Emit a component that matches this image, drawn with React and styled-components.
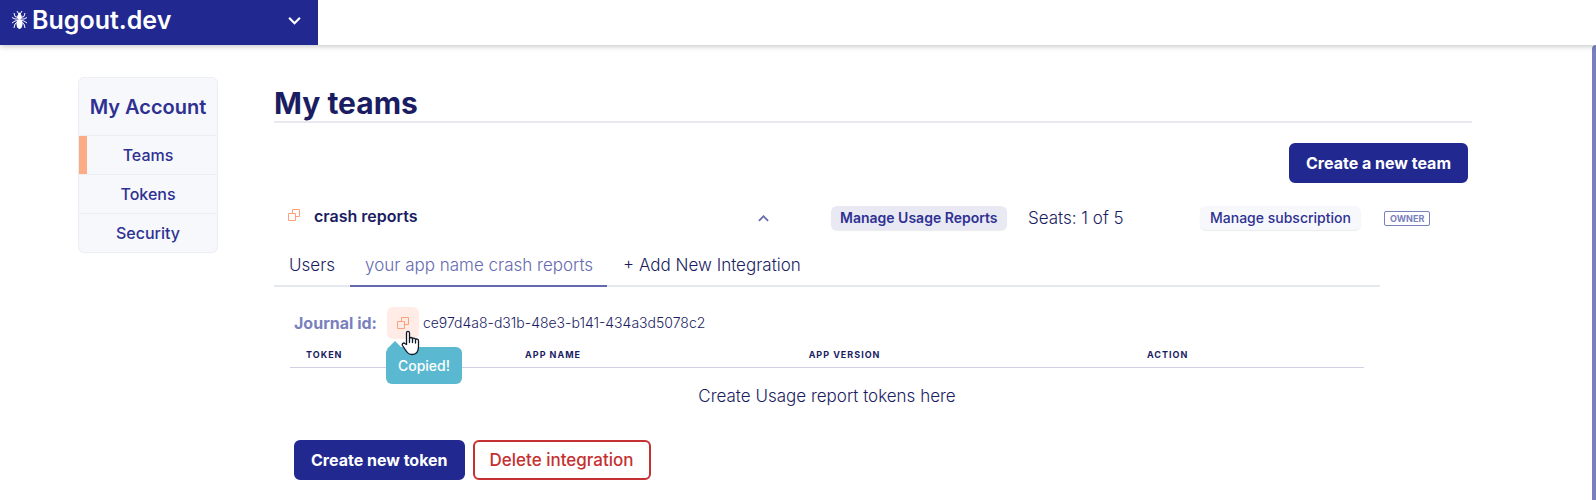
import React from "react";
import styled, { createGlobalStyle, ThemeProvider } from "styled-components";

const theme = {
  navy: "#212990",
  ink: "#1a1d62",
  text: "#2e3192",
  muted: "#7a7fbd",
  accent: "#ffa07a",
  marker: "#fdab85",
  panel: "#f7f8fc",
  line: "#edeef3",
};

const GlobalStyle = createGlobalStyle`
  *, *::before, *::after { box-sizing: border-box; }
  body {
    margin: 0;
    background: #fff;
    color: #1a1d62;
    font-family: Inter, "Liberation Sans", sans-serif;
    font-size: 16px;
    line-height: 24px;
  }
  h1, h2, p { margin: 0; }
  button { font: inherit; border: 0; padding: 0; cursor: pointer; background: none; color: inherit; white-space: nowrap; }
  a { color: inherit; text-decoration: none; }
`;

const Page = styled.div`
  display: flex;
  flex-direction: column;
  min-height: 100vh;
`;

const TopBar = styled.header`
  display: flex;
  height: 45px;
  background: #fff;
  box-shadow: 0 1px 6px rgba(0, 0, 0, 0.25);
  z-index: 1;
`;

const Brand = styled.div`
  display: flex;
  align-items: center;
  justify-content: space-between;
  width: 318px;
  padding: 0 16px 4px 11px;
  background: ${(p) => p.theme.navy};
  color: #fff;
`;

const BrandLink = styled.a`
  display: flex;
  align-items: center;
  gap: 4px;
  padding-bottom: 2px;
  font-size: 25px;
  line-height: 32px;
  font-weight: 600;
`;

const IconButton = styled.button`
  display: flex;
  align-items: center;
  justify-content: center;
  width: ${(p) => p.$size}px;
  height: ${(p) => p.$size}px;
  border-radius: 6px;
  background: ${(p) => (p.$active ? "#ffece6" : "transparent")};
  color: ${(p) => p.$color};
`;

const Body = styled.div`
  display: flex;
  flex: 1;
`;

const Content = styled.div`
  display: flex;
  flex: 1;
  align-items: flex-start;
  gap: 56px;
  padding: 32px 120px 20px 78px;
`;

const ScrollTrack = styled.div`
  width: 4px;
  background: ${(p) => p.theme.muted};
  border-top-left-radius: 4px;
`;

const Sidebar = styled.nav`
  flex: none;
  width: 140px;
  border: 1px solid ${(p) => p.theme.line};
  border-radius: 6px;
  background: ${(p) => p.theme.panel};
  color: ${(p) => p.theme.text};
  text-align: center;
  overflow: hidden;
`;

const SidebarTitle = styled.h2`
  height: 57px;
  font-size: 20px;
  line-height: 58px;
  font-weight: 600;
  white-space: nowrap;
`;

const SidebarLink = styled.a`
  display: block;
  border-top: 1px solid ${(p) => p.theme.line};
  background: linear-gradient(${(p) => (p.$active ? p.theme.marker : "transparent")} 0 0) left / 8px 100% no-repeat;
  height: 39px;
  font-size: 16px;
  line-height: 38px;
  font-weight: 500;
`;

const Main = styled.main`
  flex: 1;
  min-width: 0;
`;

const Title = styled.h1`
  padding-top: 8px;
  border-bottom: 2px solid #e9e9f4;
  font-size: 30px;
  line-height: 36px;
  font-weight: 700;
`;

const TeamActions = styled.div`
  display: flex;
  justify-content: flex-end;
  padding: 20px 4px 15px;
`;

const Button = styled.button`
  height: 40px;
  padding: 0 15px;
  border-radius: 6px;
  border: 2px solid ${(p) => (p.$danger ? "#c53030" : p.theme.navy)};
  background: ${(p) => (p.$danger ? "#fff" : p.theme.navy)};
  color: ${(p) => (p.$danger ? "#c53030" : "#fff")};
  font-weight: ${(p) => (p.$danger ? 500 : 700)};
  font-size: ${(p) => (p.$danger ? 17 : 16)}px;
`;

const TeamRow = styled.section`
  display: grid;
  grid-template-columns: 40px 1fr 76px 197px 172px 184px 88px;
  align-items: center;
  height: 40px;
  margin-bottom: 7px;
`;

const TeamCopy = styled.div`
  display: flex;
  justify-content: center;
  padding-bottom: 6px;
`;

const TeamName = styled.h2`
  padding-bottom: 4px;
  font-size: 16px;
  line-height: 24px;
  font-weight: 600;
`;

const SmallButton = styled.button`
  justify-self: start;
  height: 24px;
  padding: 0 ${(p) => (p.$filled ? 9 : 10)}px;
  border-radius: 6px;
  background: ${(p) => (p.$filled ? "#e9e9f4" : p.theme.panel)};
  box-shadow: 0 1px 1px rgba(0, 0, 0, 0.08);
  color: ${(p) => p.theme.text};
  font-size: 14px;
  line-height: 24px;
  font-weight: ${(p) => (p.$filled ? 600 : 500)};
`;

const Seats = styled.span`
  font-size: 17px;
  font-weight: 300;
`;

const OwnerTag = styled.span`
  justify-self: start;
  padding: 0 5px;
  border: 1px solid ${(p) => p.theme.muted};
  border-radius: 2px;
  color: ${(p) => p.theme.muted};
  font-size: 9px;
  line-height: 13px;
  font-weight: 700;
`;

const TeamPanel = styled.div`
  margin-right: 92px;
`;

const Tabs = styled.div`
  display: flex;
  gap: 1px;
  border-bottom: 2px solid #e5e8ee;
`;

const Tab = styled.button`
  height: 42px;
  margin-bottom: -2px;
  padding: 0 14px 0 15px;
  border-bottom: 2px solid ${(p) => (p.$active ? "#656ab0" : "transparent")};
  color: ${(p) => (p.$active ? "#656ab0" : p.theme.ink)};
  font-size: 17px;
  font-weight: 300;
`;

const TabPanel = styled.div`
  padding: 20px 16px 0;
`;

const JournalLine = styled.div`
  display: flex;
  align-items: center;
  height: 32px;
  padding-left: 4px;
`;

const JournalLabel = styled.span`
  margin-right: 10px;
  color: ${(p) => p.theme.muted};
  font-weight: 700;
`;

const JournalId = styled.span`
  padding-left: 4px;
  font-size: 14px;
  font-weight: 300;
`;

const CopyWrap = styled.div`
  position: relative;
`;

const Tooltip = styled.div`
  position: absolute;
  top: 40px;
  left: -1px;
  padding: 0 12px;
  border-radius: 6px;
  background: #5ab9d0;
  color: #fff;
  font-size: 14px;
  line-height: 37px;
  font-weight: 500;

  &::before {
    content: "";
    position: absolute;
    top: -6px;
    left: 1px;
    border: 8px solid transparent;
    border-top: 0;
    border-bottom-color: #5ab9d0;
  }
`;

const Pointer = styled.svg`
  position: absolute;
  top: 23px;
  left: 14px;
`;

const Table = styled.table`
  width: 100%;
  table-layout: fixed;
  border-collapse: collapse;
`;

const HeadCell = styled.th`
  width: ${(p) => p.$width};
  height: 28px;
  padding: 8px 16px 0;
  border-bottom: 1px solid #cfd0e4;
  font-size: 9px;
  line-height: 16px;
  font-weight: 700;
  letter-spacing: 1px;
  text-align: left;
  vertical-align: top;
  text-transform: uppercase;
`;

const EmptyCell = styled.td`
  padding: 16px;
  font-size: 17px;
  font-weight: 300;
  text-align: center;
`;

const Footer = styled.div`
  display: flex;
  gap: 8px;
  padding: 16px 4px 0;
`;

const BugIcon = () => (
  <svg width="17" height="20" viewBox="0 0 17 20" fill="none" stroke="currentColor" strokeWidth="1" aria-hidden="true">
    <ellipse cx="8.500" cy="14" rx="3" ry="5" fill="currentColor" stroke="none" />
    <circle cx="8.500" cy="7" r="2.400" fill="currentColor" stroke="none" />
    <circle cx="8.500" cy="4" r="1.500" fill="currentColor" stroke="none" />
    <path d="M7.500 3.500 6 1M9.500 3.500 11 1M7 7.500 4 6.500 3 3M10 7.500l3-1 1-3.500M7 9 4 9 1 7.500M10 9h3l3-1.500M7 10.500l-3 .5-3 2M10 10.500l3 .5 3 2M7 11.500l-3 2.500-1 4M10 11.500l3 2.500 1 4" />
  </svg>
);

const CopyIcon = () => (
  <svg width="12" height="12" viewBox="0 0 12 12" fill="none" stroke="currentColor" aria-hidden="true">
    <path d="M4.500 4V.5h7v7H8" />
    <path d="M.5 4.500h7v7h-7z" />
  </svg>
);

const Chevron = ({ up, width, weight }) => (
  <svg width={width} height={width} viewBox="0 0 12 12" fill="none" stroke="currentColor" strokeWidth={weight} aria-hidden="true">
    <path d={up ? "M1 8.500l5-5 5 5" : "M1 3.500l5 5 5-5"} />
  </svg>
);

const HandPointer = () => (
  <Pointer width="20" height="26" viewBox="0 0 20 26" fill="#fff" stroke="#111827" strokeWidth="1.300" strokeLinejoin="round" strokeLinecap="round" aria-hidden="true">
    <path d="M5.500 14.500V3c0-2.300 3-2.300 3 0v5.500c.3-1.500 2.900-1.300 3 .4.500-1.300 2.900-1 3 .7.700-1 3-.8 3 1.200v5.700c0 5-2.500 8-6.500 8-3 0-4.800-1.500-6.500-4.500l-3-4.500c-1-1.700 1-3.200 2.300-2z" />
    <path d="M8.500 8.500v4M11.500 9v3.500M14.500 10v3" />
  </Pointer>
);

const links = ["Teams", "Tokens", "Security"];
const tabs = ["Users", "your app name crash reports", "+ Add New Integration"];
const columns = [
  ["Token", "20.4%"],
  ["App name", "26.4%"],
  ["App version", "31.5%"],
  ["Action", "21.7%"],
];

export default function App() {
  return (
    <ThemeProvider theme={theme}>
      <GlobalStyle />
      <Page>
        <TopBar>
          <Brand>
            <BrandLink href="#">
              <BugIcon />
              Bugout.dev
            </BrandLink>
            <IconButton $size={16} $color="#fff" aria-label="Open menu">
              <Chevron width={13} weight={2} />
            </IconButton>
          </Brand>
        </TopBar>
        <Body>
          <Content>
            <Sidebar aria-label="Account">
              <SidebarTitle>My Account</SidebarTitle>
              {links.map((name, i) => (
                <SidebarLink key={name} href="#" $active={i === 0}>{name}</SidebarLink>
              ))}
            </Sidebar>
            <Main>
              <Title>My teams</Title>
              <TeamActions>
                <Button>Create a new team</Button>
              </TeamActions>
              <TeamRow>
                <TeamCopy>
                  <IconButton $size={16} $color={theme.accent} aria-label="Copy team id">
                    <CopyIcon />
                  </IconButton>
                </TeamCopy>
                <TeamName>crash reports</TeamName>
                <IconButton $size={16} $color="#656ab0" aria-label="Collapse team">
                  <Chevron up width={11} weight={2} />
                </IconButton>
                <SmallButton $filled>Manage Usage Reports</SmallButton>
                <Seats>Seats: 1 of 5</Seats>
                <SmallButton>Manage subscription</SmallButton>
                <OwnerTag>OWNER</OwnerTag>
              </TeamRow>
              <TeamPanel>
                <Tabs role="tablist">
                  {tabs.map((name, i) => (
                    <Tab key={name} role="tab" aria-selected={i === 1} $active={i === 1}>{name}</Tab>
                  ))}
                </Tabs>
                <TabPanel role="tabpanel">
                  <JournalLine>
                    <JournalLabel>Journal id:</JournalLabel>
                    <CopyWrap>
                      <IconButton $size={32} $active $color={theme.accent} aria-label="Copy journal id">
                        <CopyIcon />
                      </IconButton>
                      <Tooltip role="tooltip">Copied!</Tooltip>
                      <HandPointer />
                    </CopyWrap>
                    <JournalId>ce97d4a8-d31b-48e3-b141-434a3d5078c2</JournalId>
                  </JournalLine>
                  <Table>
                    <thead>
                      <tr>
                        {columns.map(([name, width]) => (
                          <HeadCell key={name} $width={width}>{name}</HeadCell>
                        ))}
                      </tr>
                    </thead>
                    <tbody>
                      <tr>
                        <EmptyCell colSpan={4}>Create Usage report tokens here</EmptyCell>
                      </tr>
                    </tbody>
                  </Table>
                  <Footer>
                    <Button>Create new token</Button>
                    <Button $danger>Delete integration</Button>
                  </Footer>
                </TabPanel>
              </TeamPanel>
            </Main>
          </Content>
          <ScrollTrack />
        </Body>
      </Page>
    </ThemeProvider>
  );
}
